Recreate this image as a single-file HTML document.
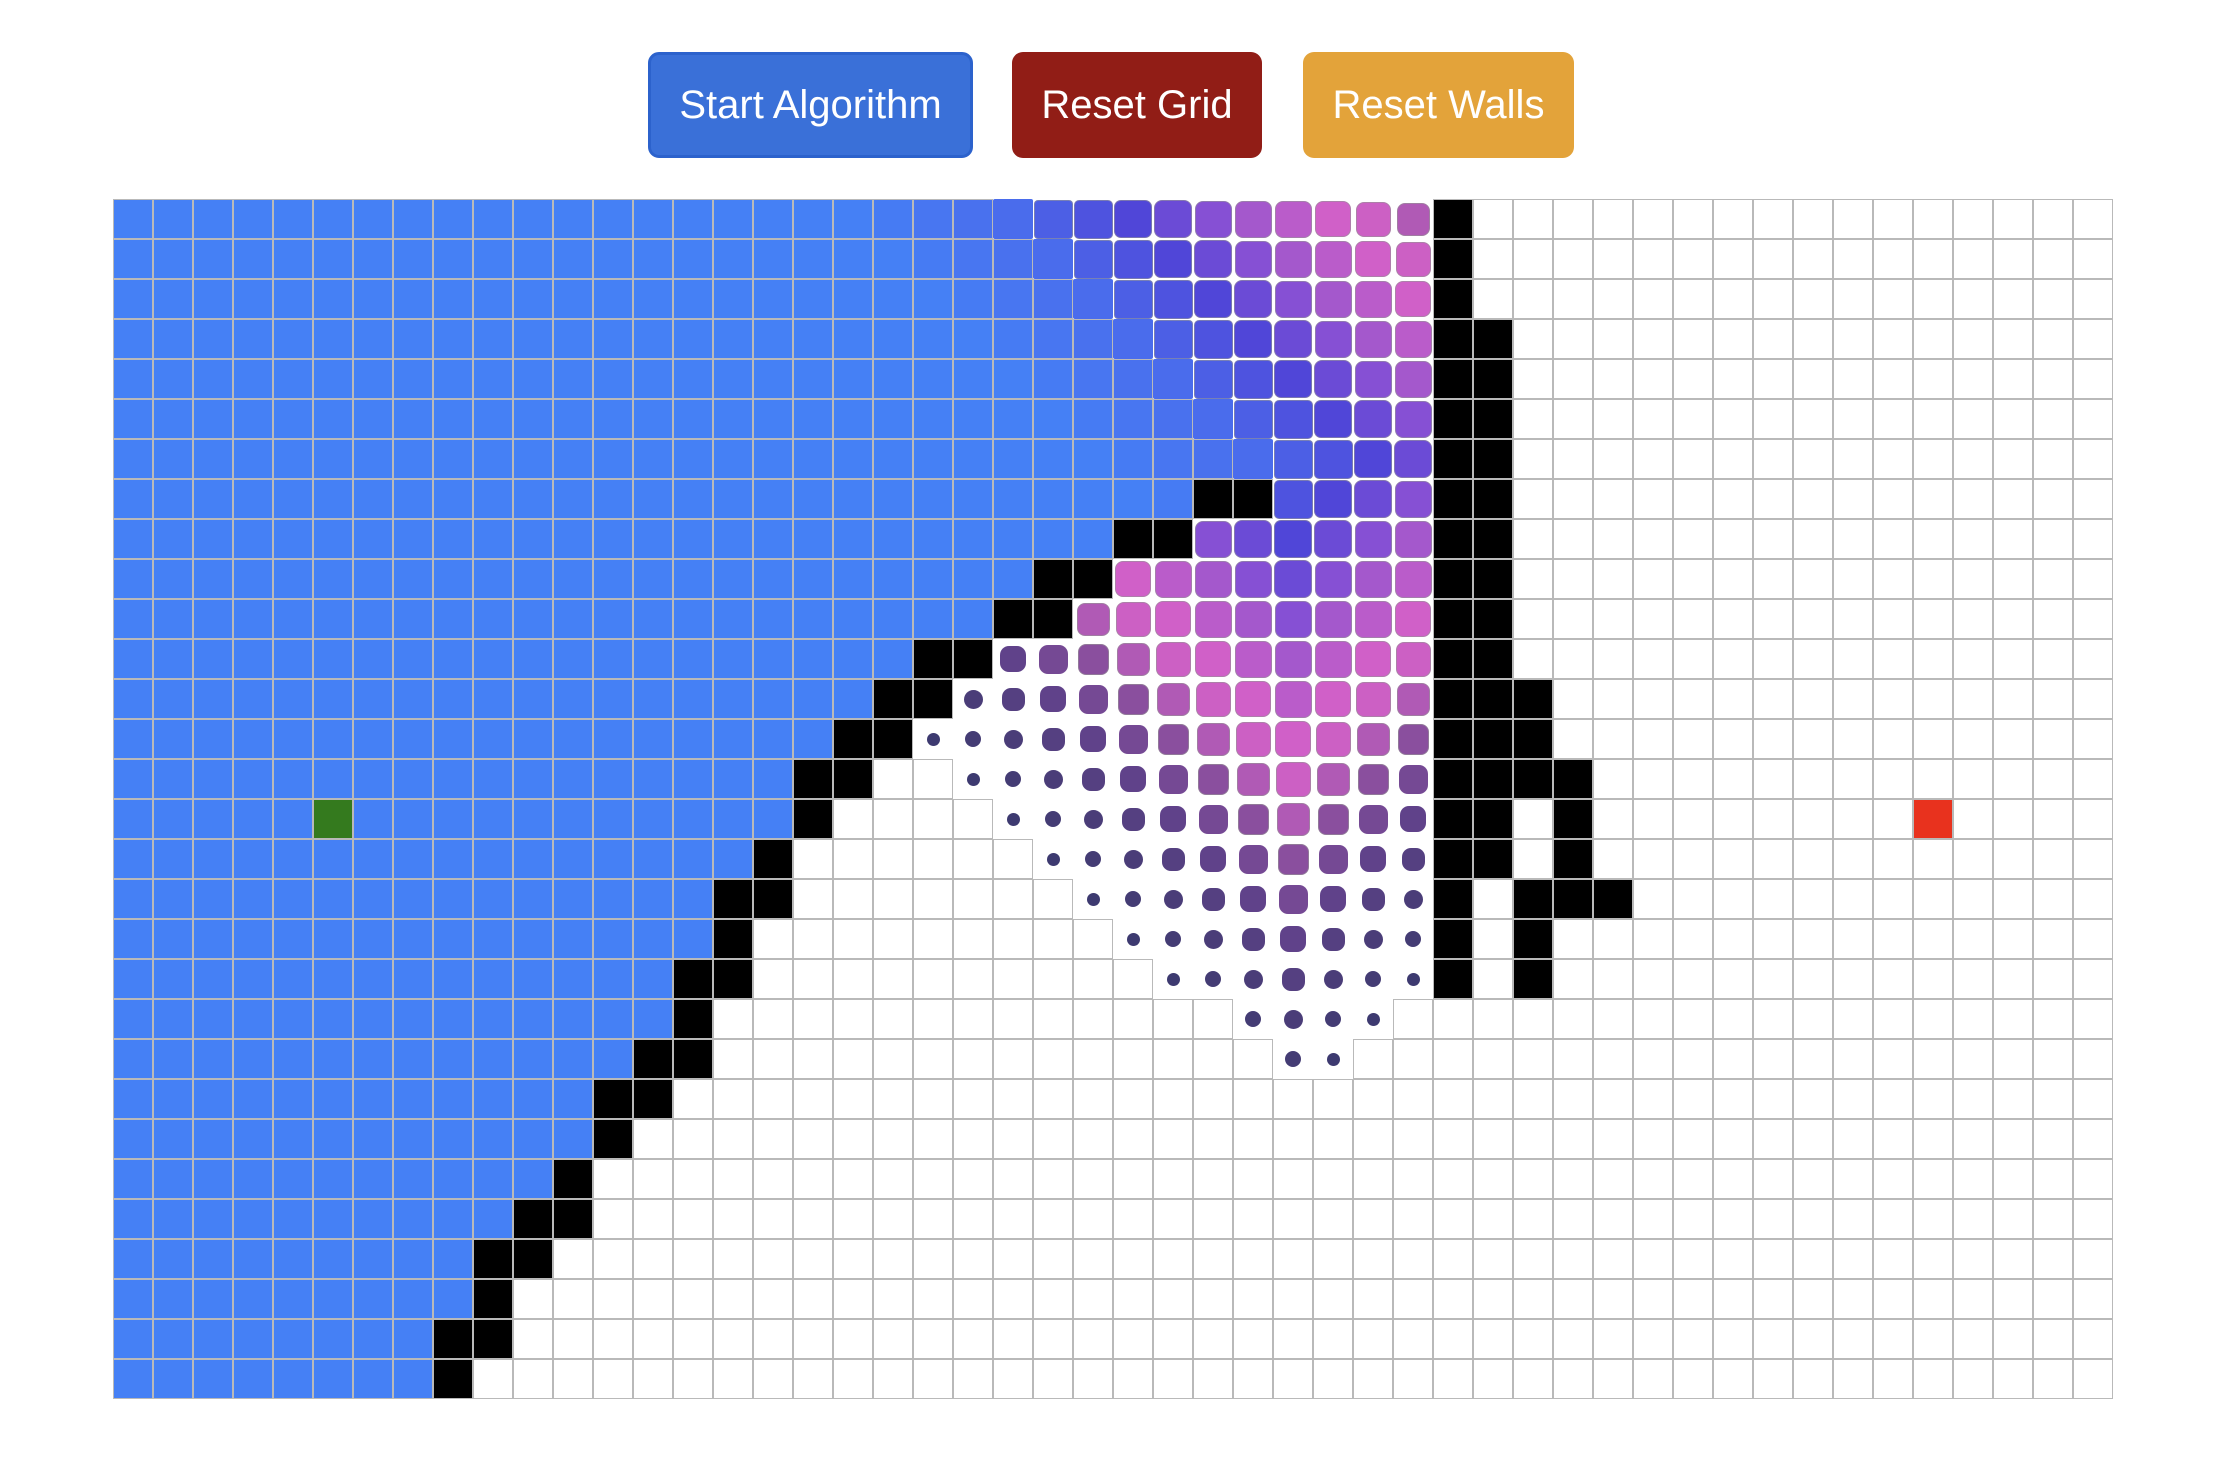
<!DOCTYPE html>
<html><head><meta charset="utf-8">
<style>
html,body{margin:0;padding:0;background:#fff;width:2214px;height:1457px;overflow:hidden;font-family:"Liberation Sans",Arial,sans-serif}
.btn{position:absolute;top:52px;height:106px;border-radius:11px;color:#fff;font-size:40px;display:flex;align-items:center;justify-content:center;box-sizing:border-box}
#grid{position:absolute;left:113px;top:199px;width:2000px;height:1200px}
.c{position:absolute;width:40px;height:40px;box-sizing:border-box;border:1px solid #b9b9b9;background:#fff}
.a{position:absolute;width:40px;height:40px;display:flex;align-items:center;justify-content:center}
.a div{box-sizing:border-box}
</style></head><body>
<div class="btn" style="left:648px;width:325px;background:#3a70d8;border:3px solid #2c62cc">Start Algorithm</div>
<div class="btn" style="left:1012px;width:250px;background:#911d16">Reset Grid</div>
<div class="btn" style="left:1303px;width:271px;background:#e3a33a">Reset Walls</div>
<div id="grid"></div>
<script>
var R=30,C=50,W={};
var wl={0:[33],1:[33],2:[33],3:[33,34],4:[33,34],5:[33,34],6:[33,34],7:[27,28,33,34],8:[25,26,33,34],9:[23,24,33,34],10:[22,23,33,34],11:[20,21,33,34],12:[19,20,33,34,35],13:[18,19,33,34,35],14:[17,18,33,34,35,36],15:[17,33,34,36],16:[16,33,34,36],17:[15,16,33,35,36,37],18:[15,33,35],19:[14,15,33,35],20:[14],21:[13,14],22:[12,13],23:[12],24:[11],25:[10,11],26:[9,10],27:[9],28:[8,9],29:[8]};
for(var r in wl)wl[r].forEach(function(c){W[r+','+c]=1});
var D={},q=[[15,5]];D['15,5']=0;
while(q.length){var p=q.shift();[[1,0],[-1,0],[0,1],[0,-1]].forEach(function(d){var nr=p[0]+d[0],nc=p[1]+d[1],k=nr+','+nc;if(nr<0||nc<0||nr>=R||nc>=C||W[k]||k in D)return;D[k]=D[p[0]+','+p[1]]+1;q.push([nr,nc]);});}
var first={12:21,13:20,14:21,15:22,16:23,17:24,18:25,19:26,20:28,21:29};
var stops=[[28,40,'#4580f5',0],[32,40,'#4a6cec',2],[35,38,'#5046d8',7],[37,37,'#8650d4',8],[38,37,'#a458cc',8],[40,36,'#d060c8',8],[41,35,'#cc60c4',8],[42,33,'#b05ab5',8],[43,31,'#8a4f9e',8],[45,26,'#60428a',9],[47,19,'#4a3d78',9],[49,13,'#3d3a70',7]];
function hx(h){return [parseInt(h.substr(1,2),16),parseInt(h.substr(3,2),16),parseInt(h.substr(5,2),16)]}
function look(d){for(var i=0;i<stops.length-1;i++){var a=stops[i],b=stops[i+1];if(d>=a[0]&&d<=b[0]){var t=(d-a[0])/(b[0]-a[0]);var ca=hx(a[2]),cb=hx(b[2]);var col='rgb('+ca.map(function(v,j){return Math.round(v+(cb[j]-v)*t)}).join(',')+')';return [a[1]+(b[1]-a[1])*t,col,a[3]+(b[3]-a[3])*t];}}return [40,'#4580f5',0];}
var h='';
for(var r=0;r<R;r++)for(var c=0;c<C;c++){var k=r+','+c,x=c*40,y=r*40,s='left:'+x+'px;top:'+y+'px;';
 if(W[k]){h+='<div class="c" style="'+s+'background:#000"></div>';continue;}
 if(r==15&&c==5){h+='<div class="c" style="'+s+'background:#347a1e"></div>';continue;}
 if(r==15&&c==45){h+='<div class="c" style="'+s+'background:#e8321e"></div>';continue;}
 var d=D[k];
 if(d!==undefined&&d<=28){h+='<div class="c" style="'+s+'background:#4580f5"></div>';continue;}
 var vis=d!==undefined&&d<=49&&r<=21&&!(first[r]!==undefined&&c<first[r])&&!(r==20&&c>31)&&!(r==21&&c>30);
 if(!vis){h+='<div class="c" style="'+s+'"></div>';continue;}
 var L=look(d);
 if(d<=31){h+='<div class="c" style="'+s+'background:'+L[1]+'"></div>';continue;}
 var sz=Math.round(L[0]),rad=Math.round(L[2]);if(sz<20)rad=sz/2;
 var bd=(d>=33&&d<=43)?'border:1px solid rgba(150,150,150,.6);':'';
 h+='<div class="a" style="'+s+'"><div style="width:'+sz+'px;height:'+sz+'px;background:'+L[1]+';border-radius:'+rad+'px;'+bd+'"></div></div>';
}
document.getElementById('grid').innerHTML=h;
</script>
</body></html>
